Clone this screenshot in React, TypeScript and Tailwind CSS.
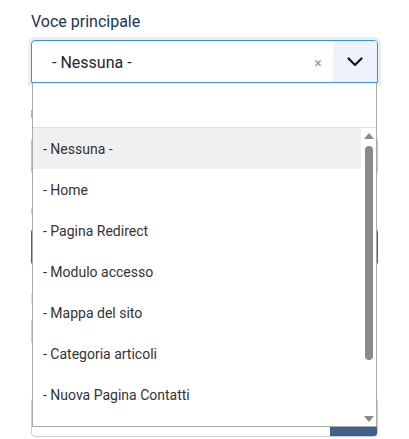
import React from 'react';

const items = [
  '- Nessuna -',
  '- Home',
  '- Pagina Redirect',
  '- Modulo accesso',
  '- Mappa del sito',
  '- Categoria articoli',
  '- Nuova Pagina Contatti',
];

const Chevron: React.FC = () => (
  <svg width="16" height="10" viewBox="0 0 16 10" fill="none">
    <path d="M1.5 1.5 L8 8 L14.5 1.5" stroke="#111" strokeWidth="2.2" strokeLinecap="round" strokeLinejoin="round" />
  </svg>
);

export default function App() {
  return (
    <div className="relative w-[409px] h-[439px] overflow-hidden bg-white font-['Roboto',sans-serif]">
      {/* form behind the open menu */}
      <div className="pl-[31px] pt-[11px] w-[378px]">
        <label className="block text-[16px] leading-[22px] text-[#1f3257]">Voce principale</label>
        <div className="mt-[7px] h-[43px]" />
        <span className="block mt-[27px] w-[3px] h-[8px] bg-[#f0a860]" />
        <div className="mt-[19px] h-[38px] rounded border border-[#b7c5dd]" />
        <span className="block mt-[33px] w-[2px] h-[6px] bg-[#f5c99a]" />
        <div className="mt-[14px] h-[38px] rounded border border-[#2f7a48]" />
        <span className="block mt-[27px] w-[2px] h-[10px] bg-[#f5e3a8]" />
        <div className="mt-[17px] h-[23px] border-l border-[#c5cfdd]" />
        <div className="mt-[54px] h-[40px] flex rounded border border-[#c9cfd6] overflow-hidden">
          <div className="flex-1" />
          <div className="w-[47px] bg-[#425f8e]" />
        </div>
      </div>

      {/* open select */}
      <div className="absolute left-[31px] top-[40px] w-[347px]">
        <div className="h-[43px] flex items-stretch rounded-t-[4px] border border-[#3d8fe0] bg-white shadow-[0_0_0_3px_#ebedef]">
          <div className="flex-1 flex items-center pl-[20px] pt-[2px] text-[16px] text-[#22262a]">- Nessuna -</div>
          <div className="w-[30px] flex items-center justify-center text-[14px] text-[#999] pt-[3px]">×</div>
          <div className="w-[44px] flex items-center justify-center bg-[#eef3fb] rounded-tr-[3px]">
            <Chevron />
          </div>
        </div>
        <div className="ml-[1px] w-[345px] border border-t-0 border-[#aaaaaa] bg-white">
          <div className="h-[45px] border-b border-[#dddddd]" />
          <div className="flex h-[298px]">
            <div className="flex-1 overflow-hidden">
              {items.map((item, i) => (
                <div
                  key={item}
                  className={`h-[41px] flex items-center pl-[10px] pt-[2px] text-[14px] text-[#333] ${i === 0 ? 'bg-[#f0f0f0]' : ''}`}
                >
                  {item}
                </div>
              ))}
            </div>
            <div className="w-[15px] flex flex-col items-center bg-white">
              <div className="mt-[5px] w-0 h-0 border-x-[5px] border-x-transparent border-b-[6px] border-b-[#8a8a8a]" />
              <div className="mt-[7px] w-[8px] h-[214px] rounded-full bg-[#8a8a8a]" />
              <div className="mt-auto mb-[4px] w-0 h-0 border-x-[5px] border-x-transparent border-t-[6px] border-t-[#8a8a8a]" />
            </div>
          </div>
        </div>
      </div>
    </div>
  );
}
